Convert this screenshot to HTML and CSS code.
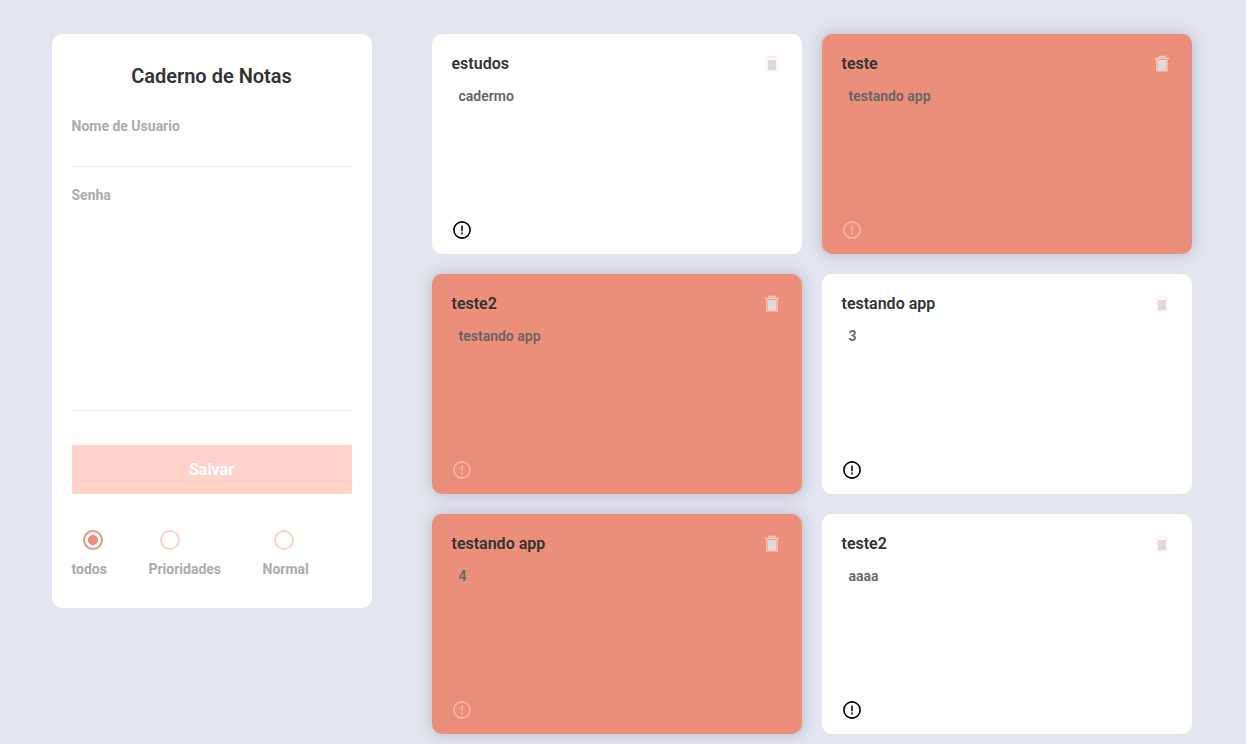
FILE: index.html
```html
<!DOCTYPE html>
<html lang="pt-BR">
<head>
<meta charset="utf-8">
<title>Caderno de Notas</title>
<link rel="stylesheet" href="styles.css">
</head>
<body>
<svg class="sprite" aria-hidden="true">
  <symbol id="trash" viewBox="0 0 20 20">
    <rect class="trash-fill" x="6" y="6" width="8" height="10"/>
    <path d="M7 4V2.500h6V4M3 4.500h14M4.900 5v11.700h10.200V5" fill="none" stroke="currentColor" stroke-width="1.500"/>
  </symbol>
  <symbol id="alert" viewBox="0 0 20 20">
    <circle cx="10" cy="10" r="8.100" fill="none" stroke="currentColor" stroke-width="1.600"/>
    <path d="M10 5.600v5.600M10 12.600v1.800" fill="none" stroke="currentColor" stroke-width="1.500"/>
  </symbol>
</svg>
<div class="app">
  <aside class="panel">
    <h1>Caderno de Notas</h1>
    <form>
      <div class="field"><label for="user">Nome de Usuario</label><input id="user"></div>
      <div class="field"><label for="pass">Senha</label><textarea id="pass"></textarea></div>
      <button type="button">Salvar</button>
    </form>
    <div class="filters">
      <label class="all"><input type="radio" name="filter" checked><span>todos</span></label>
      <label class="priority"><input type="radio" name="filter"><span>Prioridades</span></label>
      <label class="normal"><input type="radio" name="filter"><span>Normal</span></label>
    </div>
  </aside>
  <main class="notes">
    <article class="note"><header><h2>estudos</h2><svg class="trash"><use href="#trash"/></svg></header><p>cadermo</p><svg class="alert"><use href="#alert"/></svg></article>
    <article class="note urgent"><header><h2>teste</h2><svg class="trash"><use href="#trash"/></svg></header><p>testando app</p><svg class="alert"><use href="#alert"/></svg></article>
    <article class="note urgent"><header><h2>teste2</h2><svg class="trash"><use href="#trash"/></svg></header><p>testando app</p><svg class="alert"><use href="#alert"/></svg></article>
    <article class="note"><header><h2>testando app</h2><svg class="trash"><use href="#trash"/></svg></header><p>3</p><svg class="alert"><use href="#alert"/></svg></article>
    <article class="note urgent"><header><h2>testando app</h2><svg class="trash"><use href="#trash"/></svg></header><p>4</p><svg class="alert"><use href="#alert"/></svg></article>
    <article class="note"><header><h2>teste2</h2><svg class="trash"><use href="#trash"/></svg></header><p>aaaa</p><svg class="alert"><use href="#alert"/></svg></article>
  </main>
</div>
</body>
</html>
```
FILE: styles.css
```css
* { box-sizing: border-box; margin: 0; padding: 0; }
body { height: 744px; overflow: hidden; background: #e4e6ef; font-family: Roboto, sans-serif; }
.sprite { display: none; }
.app { display: flex; align-items: flex-start; gap: 60px; padding: 34px 54px 0 52px; }

.panel { width: 320px; height: 574px; padding: 30px 20px; background: #fff; border-radius: 10px; box-shadow: 0 0 14px rgba(0, 0, 0, .02); }
h1 { text-indent: -1px; font-size: 20px; line-height: 24px; font-weight: 600; text-align: center; color: #333; }
form { display: flex; flex-direction: column; margin-top: 30px; }
.field { display: flex; flex-direction: column; }
.field + .field { margin-top: 20px; }
label { text-indent: -.5px; font-size: 14px; line-height: 16px; font-weight: 700; color: #acacac; }
.field input, textarea { width: 100%; border: 0; border-bottom: 1px solid #eee; background: transparent; outline: 0; resize: none; font: inherit; }
.field input { height: 33px; }
textarea { height: 208px; }
button { text-indent: -1px; height: 49px; margin-top: 34px; border: 0; border-radius: 2px; background: #ffd3ca; color: #fff; font: 700 16px/19px Roboto, sans-serif; }
.filters { display: flex; margin-top: 36px; }
.filters label { display: flex; flex-direction: column; gap: 11px; }
.filters input { appearance: none; width: 20px; height: 20px; margin-left: 11px; border: 2px solid #ffd3ca; border-radius: 50%; }
.filters input:checked { border-color: #eb8f7a; background: radial-gradient(circle, #eb8f7a 0 4.700px, transparent 5.300px); }
.priority { margin-left: 42px; }
.normal { margin-left: 42px; }

.notes { display: grid; grid-template-columns: repeat(2, 370px); gap: 20px; }
.note { display: flex; flex-direction: column; height: 220px; padding: 20px; background: #fff; border-radius: 10px; }
.note header { display: flex; justify-content: space-between; height: 20px; }
h2 { text-indent: -.5px; font-size: 16px; line-height: 19px; font-weight: 600; color: #333; }
p { text-indent: -.5px; margin: 14px 0 0 7px; font-size: 14px; line-height: 16px; font-weight: 600; color: #666; }
.trash, .alert { width: 20px; height: 20px; }
.trash { color: #fff0ed; }
.trash-fill { fill: #dcdadb; }
.alert { margin-top: auto; margin-bottom: -6px; color: #000; }
.urgent { background: #eb8f7a; box-shadow: 0 0 16px rgba(60, 80, 100, .3); }
.urgent .trash { color: #ffc4b8; }
.urgent .alert { color: #fcb8a9; }
```
